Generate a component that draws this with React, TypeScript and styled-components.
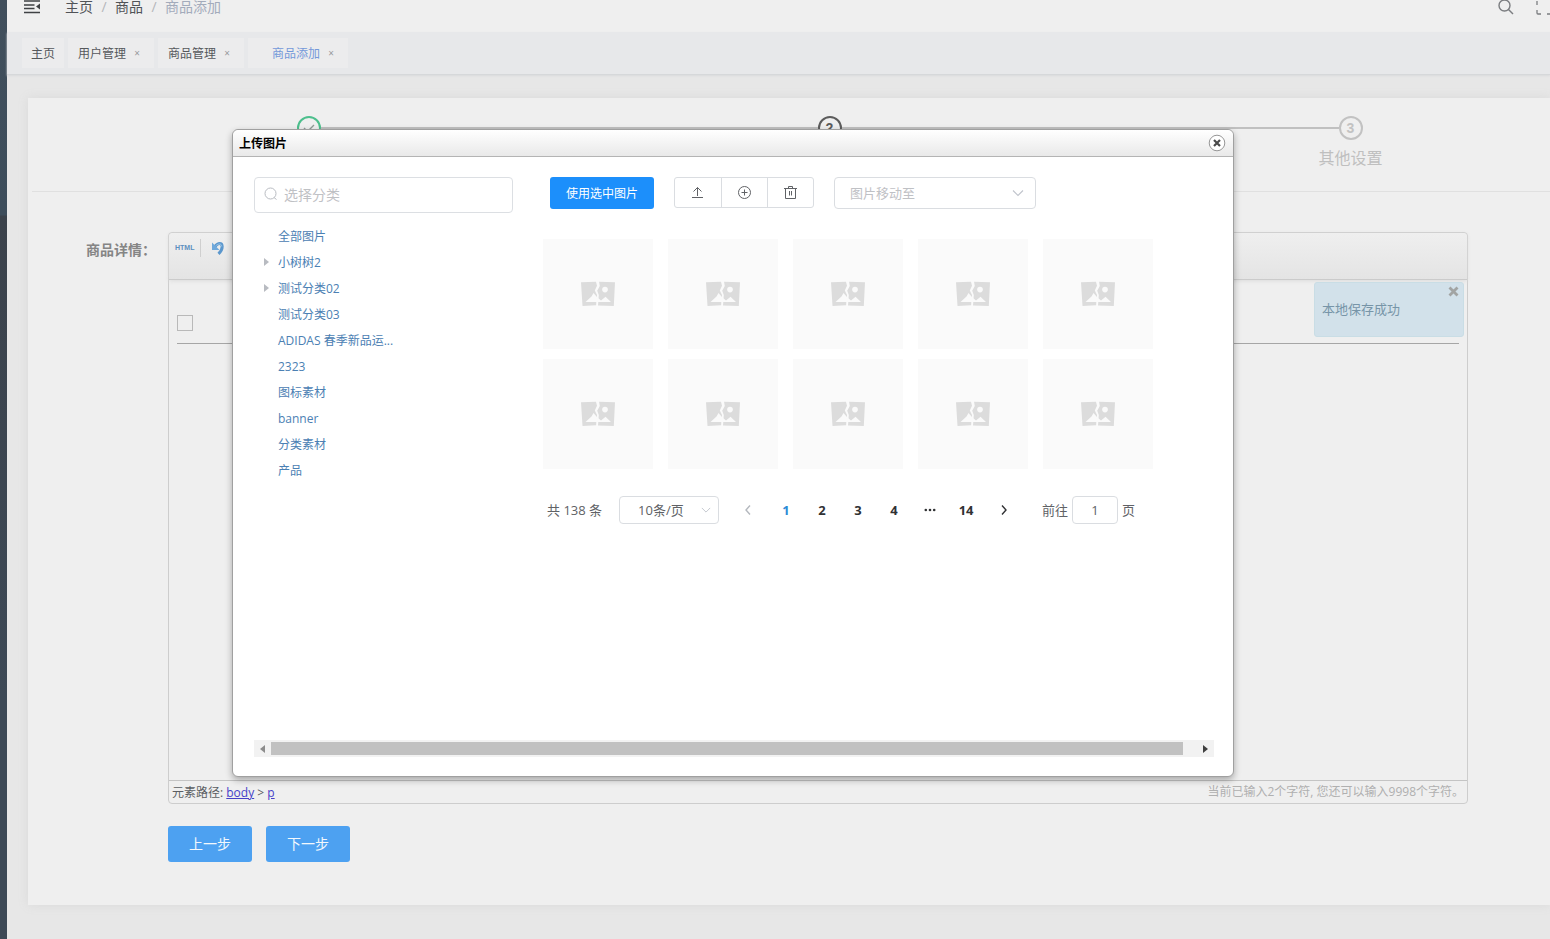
import React from 'react';
import styled, { createGlobalStyle, css } from 'styled-components';

const GlobalStyle = createGlobalStyle`
  *, *::before, *::after { box-sizing: border-box; }
  html, body { margin: 0; padding: 0; }
  body {
    font-family: "Open Sans", "Noto Sans CJK SC", sans-serif;
    font-size: 14px;
    color: #606266;
    background: #e8e8e8;
  }
  button, input, select { font-family: inherit; margin: 0; }
  button { cursor: pointer; }
  ul, ol { list-style: none; margin: 0; padding: 0; }
`;

/* ---------- page frame ---------- */

const Page = styled.div`
  position: relative;
  display: flex;
  min-height: 100vh;
  overflow: hidden;
`;

const Sidebar = styled.aside`
  flex: 0 0 7px;
  background: linear-gradient(#414f5c 0, #3d4d5b 215px, #3b424b 216px, #3d4956 700px);
`;

const Main = styled.main`
  flex: 1;
  min-width: 0;
  background: #e7e7e7;
`;

const TopBar = styled.header`
  display: flex;
  align-items: flex-start;
  height: 32px;
  padding-left: 17px;
  background: #efefef;
`;

const IconButton = styled.button`
  display: block;
  padding: 0;
  border: 0;
  background: none;
  color: inherit;
  line-height: 0;
`;

const Breadcrumb = styled.nav`
  display: flex;
  flex: 1;
  margin-left: 24px;
  line-height: 14px;
`;

const Crumb = styled.a<{ $current?: boolean }>`
  color: ${p => (p.$current ? '#a3abbb' : '#505357')};
  text-decoration: none;
`;

const Slash = styled.span`
  width: 22px;
  text-align: center;
  color: #b4b6ba;
`;

const TopActions = styled.div`
  display: flex;
  gap: 22px;
  width: 52px;
  color: #7b7d80;
`;

const TabBar = styled.nav`
  display: flex;
  align-items: center;
  gap: 4px;
  height: 43px;
  padding: 0 15px;
  background: #e7e8ea;
  border-bottom: 1px solid #d6d8da;
  box-shadow: 0 1px 2px #d9dadc;
`;

const Tab = styled.div<{ $active?: boolean; $closable?: boolean }>`
  display: flex;
  align-items: center;
  gap: 8px;
  height: 30px;
  padding: 0 ${p => (p.$active ? '14px 0 24px' : p.$closable ? '14px 0 10px' : '9px')};
  background: #ececed;
  color: ${p => (p.$active ? '#7499da' : '#55585c')};
  font-size: 12px;
`;

const TabLink = styled.a`
  color: inherit;
  text-decoration: none;
`;

const TabClose = styled.button`
  width: 6px;
  padding: 0;
  border: 0;
  background: none;
  color: #989a9e;
  font-size: 10px;
  line-height: 12px;
`;

const Card = styled.section`
  margin: 23px 0 34px 21px;
  padding-bottom: 43px;
  background: #efefef;
  box-shadow: 0 0 10px #d9d9d9;
`;

/* ---------- steps ---------- */

const Steps = styled.ol`
  display: grid;
  grid-template-columns: repeat(3, 1fr);
  height: 94px;
  margin: 0 -61px 0 4px;
  padding: 18px 0 0 16px;
  border-bottom: 1px solid #e0e0e0;
`;

type StepState = 'done' | 'active' | 'wait';
const stepColor: Record<StepState, string> = { done: '#4dbf8d', active: '#5c5c5c', wait: '#c2c2c2' };

const Step = styled.li`
  display: grid;
  grid-template-columns: 1fr 24px 1fr;
  grid-template-rows: 24px 36px;
  align-items: center;
  align-content: start;
`;

const StepLine = styled.span<{ $hidden?: boolean }>`
  height: 2px;
  background: ${p => (p.$hidden ? 'transparent' : '#c0c0c0')};
`;

const StepCircle = styled.span<{ $state: StepState }>`
  display: flex;
  align-items: center;
  justify-content: center;
  width: 24px;
  height: 24px;
  border: 2px solid ${p => stepColor[p.$state]};
  border-radius: 50%;
  color: ${p => stepColor[p.$state]};
  font: bold 14px/20px "Liberation Sans", sans-serif;
`;

const StepLabel = styled.span`
  grid-column: 1 / -1;
  text-align: center;
  font-size: 16px;
  line-height: 24px;
  color: #bfbfbf;
`;

/* ---------- form ---------- */

const FormRow = styled.div`
  display: flex;
  margin: 40px 82px 0 0;
`;

const FieldLabel = styled.span`
  width: 140px;
  padding: 8px 12px 0 0;
  text-align: right;
  font-size: 14px;
  font-weight: bold;
  line-height: 20px;
  color: #858585;
`;

const Editor = styled.div`
  position: relative;
  flex: 1;
  min-width: 0;
  border: 1px solid #cdcdcd;
  border-radius: 4px;
`;

const EditorToolbar = styled.div`
  display: flex;
  align-items: flex-start;
  height: 47px;
  padding: 6px 0 0 6px;
  border-bottom: 1px solid #cbcbcb;
  border-radius: 4px 4px 0 0;
  background: linear-gradient(#efefef, #e4e4e4);
  box-shadow: 0 1px 4px #dcdcdc;
`;

const SourceButton = styled.button`
  width: 19px;
  padding: 0;
  border: 0;
  background: none;
  color: #5c8fbf;
  font: bold 7px/18px "Liberation Sans", sans-serif;
`;

const ToolDivider = styled.span`
  width: 1px;
  height: 18px;
  margin: 0 10px 0 6px;
  background: #cfcfcf;
`;

const EditorBody = styled.div`
  height: 500px;
  padding: 35px 8px 0;
`;

const EditorCheck = styled.input`
  display: block;
  appearance: none;
  width: 16px;
  height: 16px;
  margin: 0;
  border: 1px solid #b9b9b9;
`;

const EditorRule = styled.hr`
  height: 1px;
  margin: 12px 0 0;
  border: 0;
  background: #a6a6a6;
`;

const EditorFooter = styled.footer`
  display: flex;
  justify-content: space-between;
  height: 23px;
  padding: 0 3px;
  border-top: 1px solid #c4c4c4;
  font-size: 12px;
  line-height: 23px;
  color: #5b5e62;
`;

const PathLink = styled.a`
  color: #463fc8;
`;

const CharCount = styled.span`
  color: #b0b0b0;
  line-height: 21px;
`;

const Toast = styled.div`
  position: absolute;
  top: 49px;
  right: 3px;
  width: 150px;
  height: 55px;
  padding-left: 7px;
  border: 1px solid #c9dde5;
  border-radius: 3px;
  background: #d2e1ea;
  color: #7795a8;
  font-size: 13px;
  line-height: 52px;
`;

const ToastClose = styled(IconButton)`
  position: absolute;
  top: 3px;
  right: 4px;
  color: #a2a4a3;
`;

const FormActions = styled.div`
  display: flex;
  gap: 14px;
  margin: 22px 0 0 140px;
`;

const StepButton = styled.button`
  width: 84px;
  height: 36px;
  padding: 0 0 2px;
  border: 0;
  border-radius: 3px;
  background: #4da1f1;
  color: #f2f8fd;
  font-size: 14px;
`;

/* ---------- dialog ---------- */

const Dialog = styled.section`
  position: absolute;
  top: 129px;
  left: 232px;
  display: flex;
  flex-direction: column;
  width: 1002px;
  height: 648px;
  border: 1px solid #a0a0a0;
  border-radius: 6px;
  background: #fff;
  box-shadow: 0 3px 7px rgba(0, 0, 0, 0.3);
`;

const DialogHeader = styled.header`
  display: flex;
  align-items: center;
  justify-content: space-between;
  height: 27px;
  padding: 0 7px 0 6px;
  border-bottom: 1px solid #b4b4b4;
  border-radius: 6px 6px 0 0;
  background: linear-gradient(#fff, #e9e9e9);
`;

const DialogTitle = styled.h2`
  margin: 0;
  font-size: 12px;
  color: #000;
`;

const DialogBody = styled.div`
  display: flex;
  flex: 1;
  flex-direction: column;
  justify-content: space-between;
  padding: 20px 19px 19px 21px;
`;

const Columns = styled.div`
  display: flex;
  gap: 30px;
`;

const Categories = styled.div`
  flex: 0 0 259px;
`;

const SearchBox = styled.label`
  display: flex;
  align-items: center;
  gap: 6px;
  height: 36px;
  padding: 0 10px 2px 9px;
  border: 1px solid #dcdfe3;
  border-radius: 4px;
  color: #b9bcc2;
`;

const SearchInput = styled.input`
  flex: 1;
  min-width: 0;
  padding: 0;
  border: 0;
  outline: 0;
  background: none;
  font-size: 14px;
  &::placeholder { color: #bfc1c5; }
`;

const Tree = styled.ul`
  margin-top: 10px;
`;

const TreeRow = styled.li`
  display: flex;
  align-items: center;
  height: 26px;
  padding-left: 10px;
  font-size: 12px;
`;

const TreeArrow = styled.span`
  width: 14px;
  line-height: 0;
  color: #b8bbc1;
`;

const TreeLink = styled.a`
  color: #4b80b3;
  text-decoration: none;
`;

const Library = styled.div`
  flex: 1;
  min-width: 0;
`;

const Tools = styled.div`
  display: flex;
  gap: 20px;
  height: 32px;
  padding-left: 7px;
`;

const UseButton = styled.button`
  width: 104px;
  height: 32px;
  padding: 0;
  border: 0;
  border-radius: 3px;
  background: #1c8ffb;
  color: #fff;
  font-size: 12px;
`;

const ButtonGroup = styled.div`
  display: flex;
  height: 31px;
  border: 1px solid #dadde1;
  border-radius: 3px;
  color: #606266;
`;

const GroupButton = styled.button`
  display: flex;
  align-items: center;
  justify-content: center;
  width: 46px;
  padding: 0;
  border: 0;
  background: none;
  color: inherit;
  & + & { border-left: 1px solid #dadde1; }
`;

const selectFrame = css`
  position: relative;
  display: flex;
  align-items: center;
  border: 1px solid #dadde1;
  border-radius: 4px;
  color: #c0c4cc;
  svg { position: absolute; pointer-events: none; }
`;

const MoveSelect = styled.label`
  ${selectFrame}
  width: 202px;
  height: 32px;
  svg { right: 11px; }
`;

const SizeSelect = styled.label`
  ${selectFrame}
  width: 100px;
  height: 28px;
  margin: 0 9px 0 17px;
  svg { right: 7px; }
`;

const Select = styled.select<{ $muted?: boolean }>`
  appearance: none;
  width: 100%;
  height: 100%;
  padding: 0 ${p => (p.$muted ? '30px 0 15px' : '20px 0 18px')};
  border: 0;
  outline: 0;
  background: none;
  font-size: 13px;
  color: ${p => (p.$muted ? '#bfc1c5' : '#606266')};
`;

const Gallery = styled.div`
  display: grid;
  grid-template-columns: repeat(5, 110px);
  gap: 10px 15px;
  margin-top: 30px;
`;

const Tile = styled.div`
  display: flex;
  align-items: center;
  justify-content: center;
  height: 110px;
  background: #fafafa;
  color: #dcdcdc;
`;

const Pagination = styled.nav`
  display: flex;
  align-items: center;
  height: 28px;
  margin-top: 27px;
  padding-left: 4px;
  font-size: 13px;
  line-height: 26px;
`;

const PageButton = styled.button<{ $current?: boolean; $disabled?: boolean }>`
  display: flex;
  align-items: center;
  justify-content: center;
  width: 36px;
  height: 28px;
  padding: 0;
  border: 0;
  background: none;
  font-size: 13px;
  font-weight: bold;
  color: ${p => (p.$current ? '#2b8bd6' : p.$disabled ? '#b4b8be' : '#303133')};
`;

const Arrow = styled(PageButton)`
  width: 28px;
  margin: 0 6px;
`;

const Jump = styled.label`
  display: flex;
  align-items: center;
  gap: 4px;
  margin-left: 18px;
`;

const JumpInput = styled.input`
  width: 46px;
  height: 28px;
  padding: 0;
  border: 1px solid #dadde1;
  border-radius: 4px;
  outline: 0;
  text-align: center;
  font-size: 13px;
  color: #606266;
`;

const ScrollBar = styled.div`
  display: flex;
  align-items: center;
  height: 17px;
  background: #f2f2f2;
`;

const ScrollButton = styled.button<{ $dim?: boolean }>`
  display: flex;
  align-items: center;
  justify-content: center;
  width: 17px;
  height: 17px;
  padding: 0;
  border: 0;
  background: none;
  color: ${p => (p.$dim ? '#8c8c8c' : '#404040')};
`;

const ScrollTrack = styled.div`
  flex: 1;
`;

const ScrollThumb = styled.div`
  width: 98.5%;
  height: 13px;
  background: #c1c1c1;
`;

/* ---------- icons ---------- */

const FoldIcon = () => (
  <svg width="17" height="14" viewBox="0 0 17 14" fill="none" stroke="#3f4144" strokeWidth="1.5">
    <path d="M0 1h16M0 5h10.500M0 8.500h10.500M0 12.500h16" />
    <path d="M16 3.500v6l-4-3z" fill="#3f4144" stroke="none" />
  </svg>
);

const TopSearchIcon = () => (
  <svg width="16" height="15" viewBox="0 0 16 15" fill="none" stroke="currentColor" strokeWidth="1.4">
    <circle cx="6.5" cy="5.5" r="5.5" />
    <path d="M10.5 9.5l4.5 4.5" />
  </svg>
);

const FullscreenIcon = () => (
  <svg width="16" height="14" viewBox="0 0 16 14" fill="none" stroke="currentColor" strokeWidth="1.3">
    <path d="M1 4V0M1 9v3q0 1 1 1h3M11 13h3q1 0 1-1V9M15 4V0" />
  </svg>
);

const SearchIcon = () => (
  <svg width="14" height="14" viewBox="0 0 14 14" fill="none" stroke="currentColor">
    <circle cx="6.5" cy="6.5" r="5.5" />
    <path d="M10 10.5l2.5 2" />
  </svg>
);

const UndoIcon = () => (
  <svg width="14" height="17" viewBox="0 0 14 17">
    <path d="M4 7.500C7 3.500 11 3.500 11.200 7.500C11.200 10.500 10 12.500 7.500 14.800" fill="none" stroke="#5b97cd" strokeWidth="3" />
    <path d="M4.500 7C7 4.500 10.500 4 10.800 7.500" fill="none" stroke="#9cc8ec" strokeWidth="1" />
    <path d="M1 3.500v7.500h7.500z" fill="#6ea8db" />
  </svg>
);

const CheckIcon = () => (
  <svg width="14" height="12" viewBox="0 0 14 12" fill="none" stroke="#8f9a95" strokeWidth="1.4">
    <path d="M2 6l3.500 3.500L12 3" />
  </svg>
);

const CrossIcon = () => (
  <svg width="11" height="11" viewBox="0 0 11 11" stroke="currentColor" strokeWidth="2.8">
    <path d="M1.500 1.500l8 8M9.500 1.500l-8 8" />
  </svg>
);

const DialogCloseIcon = () => (
  <svg width="18" height="18" viewBox="0 0 18 18" fill="none">
    <circle cx="9" cy="9" r="7.800" fill="#fff" stroke="#979797" />
    <path d="M6 6l6 6M12 6l-6 6" stroke="#4a4a4a" strokeWidth="2.200" />
  </svg>
);

const Triangle = ({ left }: { left?: boolean }) => (
  <svg width="5" height="8" viewBox="0 0 5 8">
    <path d={left ? 'M5 0v8L0 4z' : 'M0 0v8l5-4z'} fill="currentColor" />
  </svg>
);

const UploadIcon = () => (
  <svg width="14" height="14" viewBox="0 0 14 14" fill="none" stroke="currentColor">
    <path d="M6.500 10V1.500M2.500 5.500l4-4 4 4M1 11.500h11" />
  </svg>
);

const PlusCircleIcon = () => (
  <svg width="14" height="14" viewBox="0 0 14 14" fill="none" stroke="currentColor">
    <circle cx="6.500" cy="6.500" r="6" />
    <path d="M6.500 3.500v6M3.500 6.500h6" />
  </svg>
);

const TrashIcon = () => (
  <svg width="14" height="14" viewBox="0 0 14 14" fill="none" stroke="currentColor">
    <path d="M0 2.500h13M4.500 2.500V.5h4v2M1.500 2.500v10h10v-10M5.500 5v4.500M7.500 5v4.500" />
  </svg>
);

const Chevron = ({ size = 12 }: { size?: number }) => (
  <svg width={size} height={size} viewBox="0 0 12 12" fill="none" stroke="currentColor" strokeWidth="1.1">
    <path d="M1 3.500l5 5 5-5" />
  </svg>
);

const SideChevron = ({ left }: { left?: boolean }) => (
  <svg width="8" height="12" viewBox="0 0 8 12" fill="none" stroke="currentColor" strokeWidth="1.4">
    <path d={left ? 'M6 1.500L2 6l4 4.500' : 'M2 1.500L6 6l-4 4.500'} />
  </svg>
);

const DotsIcon = () => (
  <svg width="12" height="4" viewBox="0 0 12 4" fill="currentColor">
    <circle cx="1.8" cy="2" r="1.3" />
    <circle cx="6" cy="2" r="1.3" />
    <circle cx="10.2" cy="2" r="1.3" />
  </svg>
);

const BrokenImageIcon = () => (
  <svg width="34" height="26" viewBox="0 0 34 26">
    <path d="M0 1.200L15 .8l1 4-2.200 4.700L16 14l-.7 10.300L1.500 25z" fill="currentColor" />
    <path d="M18 .8L34 1.200 32.800 25 17 24.500 17.800 14l-1.600-4.200L18.800 5z" fill="currentColor" />
    <circle cx="24" cy="8.600" r="2.800" fill="#fafafa" />
    <path d="M4.500 21l6-5.500L12.500 12l3 3.500 1.500 1.500L20 19.500l4.500-3.800 5.500 5.300z" fill="#fafafa" />
    <path d="M16.200 19v6" stroke="#fafafa" strokeWidth="1.4" />
  </svg>
);

/* ---------- data ---------- */

const tabs = [
  { label: '主页', closable: false },
  { label: '用户管理', closable: true },
  { label: '商品管理', closable: true },
  { label: '商品添加', closable: true, active: true },
];

const categories = [
  { label: '全部图片' },
  { label: '小树树2', parent: true },
  { label: '测试分类02', parent: true },
  { label: '测试分类03' },
  { label: 'ADIDAS 春季新品运...' },
  { label: '2323' },
  { label: '图标素材' },
  { label: 'banner' },
  { label: '分类素材' },
  { label: '产品' },
];

const UploadDialog = () => (
  <Dialog role="dialog" aria-labelledby="dialog-title">
    <DialogHeader>
      <DialogTitle id="dialog-title">上传图片</DialogTitle>
      <IconButton aria-label="关闭"><DialogCloseIcon /></IconButton>
    </DialogHeader>
    <DialogBody>
      <Columns>
        <Categories>
          <SearchBox>
            <SearchIcon />
            <SearchInput placeholder="选择分类" aria-label="选择分类" />
          </SearchBox>
          <Tree>
            {categories.map(c => (
              <TreeRow key={c.label}>
                <TreeArrow>{c.parent && <Triangle />}</TreeArrow>
                <TreeLink href="#">{c.label}</TreeLink>
              </TreeRow>
            ))}
          </Tree>
        </Categories>
        <Library>
          <Tools>
            <UseButton>使用选中图片</UseButton>
            <ButtonGroup>
              <GroupButton aria-label="上传"><UploadIcon /></GroupButton>
              <GroupButton aria-label="添加"><PlusCircleIcon /></GroupButton>
              <GroupButton aria-label="删除"><TrashIcon /></GroupButton>
            </ButtonGroup>
            <MoveSelect>
              <Select $muted aria-label="图片移动至"><option>图片移动至</option></Select>
              <Chevron />
            </MoveSelect>
          </Tools>
          <Gallery>
            {Array.from({ length: 10 }, (_, i) => (
              <Tile key={i}><BrokenImageIcon /></Tile>
            ))}
          </Gallery>
          <Pagination aria-label="分页">
            <span>共 138 条</span>
            <SizeSelect>
              <Select aria-label="每页条数"><option>10条/页</option></Select>
              <Chevron size={10} />
            </SizeSelect>
            <Arrow $disabled aria-label="上一页"><SideChevron left /></Arrow>
            <PageButton $current>1</PageButton>
            <PageButton>2</PageButton>
            <PageButton>3</PageButton>
            <PageButton>4</PageButton>
            <PageButton aria-label="更多"><DotsIcon /></PageButton>
            <PageButton>14</PageButton>
            <Arrow aria-label="下一页"><SideChevron /></Arrow>
            <Jump>
              前往
              <JumpInput defaultValue="1" />
              页
            </Jump>
          </Pagination>
        </Library>
      </Columns>
      <ScrollBar>
        <ScrollButton $dim aria-label="向左"><Triangle left /></ScrollButton>
        <ScrollTrack><ScrollThumb /></ScrollTrack>
        <ScrollButton aria-label="向右"><Triangle /></ScrollButton>
      </ScrollBar>
    </DialogBody>
  </Dialog>
);

export default function App() {
  return (
    <>
      <GlobalStyle />
      <Page>
        <Sidebar />
        <Main>
          <TopBar>
            <IconButton aria-label="折叠菜单"><FoldIcon /></IconButton>
            <Breadcrumb>
              <Crumb href="#">主页</Crumb>
              <Slash>/</Slash>
              <Crumb href="#">商品</Crumb>
              <Slash>/</Slash>
              <Crumb href="#" $current>商品添加</Crumb>
            </Breadcrumb>
            <TopActions>
              <IconButton aria-label="搜索"><TopSearchIcon /></IconButton>
              <IconButton aria-label="全屏"><FullscreenIcon /></IconButton>
            </TopActions>
          </TopBar>
          <TabBar>
            {tabs.map(t => (
              <Tab key={t.label} $active={t.active} $closable={t.closable}>
                <TabLink href="#">{t.label}</TabLink>
                {t.closable && <TabClose aria-label="关闭标签">×</TabClose>}
              </Tab>
            ))}
          </TabBar>
          <Card>
            <Steps>
              <Step>
                <StepLine $hidden />
                <StepCircle $state="done"><CheckIcon /></StepCircle>
                <StepLine />
              </Step>
              <Step>
                <StepLine />
                <StepCircle $state="active">2</StepCircle>
                <StepLine />
              </Step>
              <Step>
                <StepLine />
                <StepCircle $state="wait">3</StepCircle>
                <StepLine $hidden />
                <StepLabel>其他设置</StepLabel>
              </Step>
            </Steps>
            <FormRow>
              <FieldLabel>商品详情：</FieldLabel>
              <Editor>
                <EditorToolbar>
                  <SourceButton>HTML</SourceButton>
                  <ToolDivider />
                  <IconButton aria-label="撤销"><UndoIcon /></IconButton>
                </EditorToolbar>
                <EditorBody>
                  <EditorCheck type="checkbox" aria-label="选择" />
                  <EditorRule />
                </EditorBody>
                <Toast role="status">
                  本地保存成功
                  <ToastClose aria-label="关闭提示"><CrossIcon /></ToastClose>
                </Toast>
                <EditorFooter>
                  <span>元素路径: <PathLink href="#">body</PathLink> &gt; <PathLink href="#">p</PathLink></span>
                  <CharCount>当前已输入2个字符, 您还可以输入9998个字符。</CharCount>
                </EditorFooter>
              </Editor>
            </FormRow>
            <FormActions>
              <StepButton>上一步</StepButton>
              <StepButton>下一步</StepButton>
            </FormActions>
          </Card>
        </Main>
        <UploadDialog />
      </Page>
    </>
  );
}
